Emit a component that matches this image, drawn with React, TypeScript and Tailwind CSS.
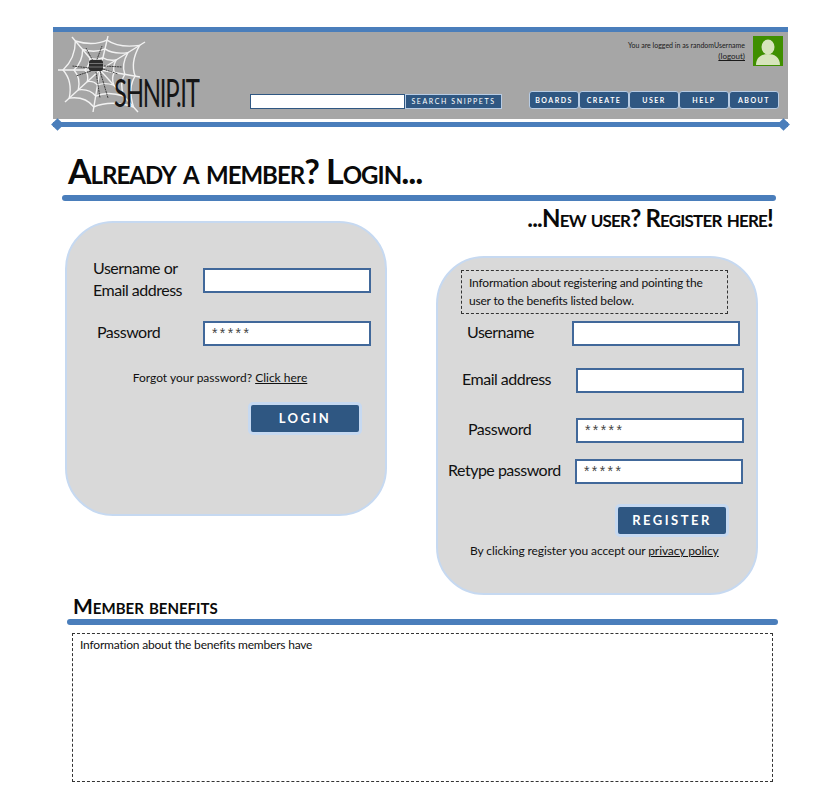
const font = { fontFamily: 'Lato, "Liberation Sans", sans-serif' };
const maskFont = { fontFamily: '"Liberation Sans", sans-serif' };

// spoke ends of the logo's web, relative to the svg box
const center = [42, 34];
const spokes = [
  [14, 1], [50, 0], [87, 6], [82, 41], [80, 76], [35, 76], [7, 66], [0, 34],
];

function webPaths() {
  const out: string[] = [];
  [0.36, 0.62, 0.88].forEach((t) => {
    const pts = spokes.map(([x, y]) => [center[0] + (x - center[0]) * t, center[1] + (y - center[1]) * t]);
    let d = `M${pts[0][0]} ${pts[0][1]}`;
    pts.forEach((p, i) => {
      const n = pts[(i + 1) % pts.length];
      const cx = center[0] + ((p[0] + n[0]) / 2 - center[0]) * 0.8;
      const cy = center[1] + ((p[1] + n[1]) / 2 - center[1]) * 0.8;
      d += ` Q${cx} ${cy} ${n[0]} ${n[1]}`;
    });
    out.push(d);
  });
  return out;
}

function Logo() {
  return (
    <div className="relative h-[80px] w-[145px]">
      <svg width="92" height="80" viewBox="0 0 92 80" className="absolute left-0 top-0">
        {spokes.map(([x, y], i) => (
          <line key={i} x1={center[0]} y1={center[1]} x2={x} y2={y} stroke="#f2f2f2" strokeWidth="1.4" />
        ))}
        {webPaths().map((d) => (
          <path key={d} d={d} fill="none" stroke="#f2f2f2" strokeWidth="1.4" />
        ))}
        <g stroke="#222" strokeWidth="0.8" fill="none" strokeDasharray="2 0.6">
          <path d="M36 27 L28 12 M38 26 L44 10 M32 32 L14 30 M33 35 L18 40 M46 30 L64 31 M45 33 L60 38 M38 36 L42 62 M42 35 L50 62" />
        </g>
        <rect x="31" y="24" width="14" height="11" rx="2" fill="#2b2b2b" />
        <path d="M31 27.5 H45 M31 31 H45" stroke="#a6a6a6" strokeWidth="0.6" />
      </svg>
      <span className="absolute left-[56px] top-[37px] text-[38px] leading-[38px] tracking-[-2px] text-[#161616] [transform:scaleX(0.63)] origin-left whitespace-nowrap" style={font}>
        SHNIP.IT
      </span>
    </div>
  );
}

function Avatar() {
  return (
    <svg width="30" height="30" viewBox="0 0 30 30" className="shrink-0">
      <rect width="30" height="30" fill="#3f8f00" />
      <ellipse cx="15" cy="11" rx="6.5" ry="7.5" fill="#d7e4bc" />
      <path d="M3 29 C3 21 9 18 15 18 C21 18 27 21 27 29 Z" fill="#d7e4bc" />
    </svg>
  );
}

const navItems = ["BOARDS", "CREATE", "USER", "HELP", "ABOUT"];

function Header() {
  return (
    <div className="ml-[53px] mr-[47px] pt-[27px]">
      <div className="border-t-[5px] border-[#4a7ebb] bg-[#a6a6a6] h-[92px] flex px-[5px] pt-[4px]">
        <Logo />
        <div className="flex pt-[58px] ml-[47px]">
          <div className="h-[15px] w-[155px] bg-white border border-[#2f5782]" />
          <div className="h-[15px] w-[97px] flex items-center justify-center bg-[#2f5782] border border-[#b8cce4] text-[7px] tracking-[1.6px] text-white" style={font}>
            SEARCH SNIPPETS
          </div>
        </div>
        <div className="flex-1 flex flex-col items-end">
          <div className="flex gap-[8px]">
            <div className="text-right text-[7px] leading-[11px] text-[#1a1a1a] pt-[4px]" style={font}>
              <div>You are logged in as randomUsername</div>
              <div className="underline text-[8px]">(logout)</div>
            </div>
            <Avatar />
          </div>
          <div className="flex mt-[25px] mr-[4px]">
            {navItems.map((n) => (
              <div key={n} className="w-[50px] h-[18px] flex items-center justify-center rounded-[3px] border border-[#b8cce4] bg-[#2f5782] text-[7px] font-bold tracking-[1.5px] text-white" style={font}>
                {n}
              </div>
            ))}
          </div>
        </div>
      </div>
      <div className="relative mt-[3px] h-[5px] bg-[#4a7ebb]">
        <div className="absolute left-0 -top-[2px] h-[9px] w-[9px] rotate-45 bg-[#4a7ebb]" />
        <div className="absolute right-0 -top-[2px] h-[9px] w-[9px] rotate-45 bg-[#4a7ebb]" />
      </div>
    </div>
  );
}

function Field({ label, mask, className, labelClass }: { label: React.ReactNode; mask?: boolean; className: string; labelClass: string }) {
  return (
    <div className={`flex items-center ${className}`}>
      <div className={`pb-[3px] text-[16px] leading-[22px] tracking-[-0.5px] whitespace-nowrap text-[#111] ${labelClass}`} style={font}>
        {label}
      </div>
      <div className="h-[25px] w-[168px] flex items-center bg-white border-2 border-[#41689a] pl-[7px] text-[14px] tracking-[2.4px] text-[#444]" style={maskFont}>
        {mask ? "*****" : ""}
      </div>
    </div>
  );
}

function ActionButton({ label }: { label: string }) {
  return (
    <div className="h-[33px] w-[114px] flex items-center justify-center rounded-[5px] border-[3px] border-[#c6d9f1] bg-[#2f5782] text-[13px] font-bold tracking-[2.5px] text-white" style={font}>
      {label}
    </div>
  );
}

function LoginCard() {
  return (
    <div className="w-[322px] h-[295px] rounded-[48px] border-2 border-[#c6d9f1] bg-[#d9d9d9] pt-[34px]">
      <Field
        className="ml-[26px]"
        labelClass="w-[110px]"
        label={<>Username or<br />Email address</>}
      />
      <Field className="ml-[30px] mt-[17px]" labelClass="w-[106px]" label="Password" mask />
      <div className="mt-[22px] text-center text-[12px] leading-[20px] text-[#111] pr-[12px]" style={font}>
        Forgot your password? <span className="underline">Click here</span>
      </div>
      <div className="flex mt-[14px] ml-[181px]">
        <ActionButton label="LOGIN" />
      </div>
    </div>
  );
}

function RegisterCard() {
  return (
    <div className="w-[322px] h-[339px] rounded-[48px] border-2 border-[#c6d9f1] bg-[#d9d9d9] pt-[12px]">
      <div className="ml-[23px] w-[267px] h-[44px] border border-dashed border-[#333] px-[7px] py-[3px] text-[12px] leading-[18px] tracking-[-0.2px] whitespace-nowrap text-[#111]" style={font}>
        Information about registering and pointing the<br />user to the benefits listed below.
      </div>
      <Field className="ml-[29px] mt-[7px]" labelClass="w-[105px]" label="Username" />
      <Field className="ml-[24px] mt-[22px]" labelClass="w-[114px]" label="Email address" />
      <Field className="ml-[30px] mt-[25px]" labelClass="w-[108px]" label="Password" mask />
      <Field className="ml-[10px] mt-[16px]" labelClass="w-[127px]" label="Retype password" mask />
      <div className="flex mt-[20px] ml-[177px]">
        <ActionButton label="REGISTER" />
      </div>
      <div className="mt-[4px] ml-[32px] text-[12px] leading-[20px] tracking-[-0.1px] whitespace-nowrap text-[#111]" style={font}>
        By clicking register you accept our <span className="underline">privacy policy</span>
      </div>
    </div>
  );
}

export default function App() {
  return (
    <div className="w-[835px] h-[796px] bg-white overflow-hidden">
      <Header />
      <div className="ml-[62px] w-[714px] mt-[24px]">
        <h1 className="ml-[6px] h-[40px] text-[34px] leading-[40px] tracking-[-1px] font-bold text-[#0a0a0a] [font-variant:small-caps]" style={font}>
          Already a member? Login...
        </h1>
        <div className="mt-[4px] h-[6px] rounded-full bg-[#4a7ebb]" />
      </div>
      <div className="flex ml-[65px] w-[711px]">
        <div className="mt-[20px]">
          <LoginCard />
        </div>
        <div className="ml-[49px] flex-1">
          <div className="pt-[3px] pr-[3px] h-[55px] text-right text-[24px] leading-[28px] tracking-[-0.8px] font-bold text-[#0a0a0a] [font-variant:small-caps]" style={font}>
            ...New user? Register here!
          </div>
          <RegisterCard />
        </div>
      </div>
      <div className="ml-[67px] w-[711px]">
        <h2 className="ml-[6px] h-[24px] text-[21px] leading-[22px] font-bold text-[#0a0a0a] [font-variant:small-caps]" style={font}>
          Member benefits
        </h2>
        <div className="h-[6px] rounded-full bg-[#4a7ebb]" />
        <div className="mt-[8px] ml-[5px] w-[701px] h-[149px] border border-dashed border-[#333] px-[7px] py-[2px] text-[12px] leading-[18px] tracking-[-0.2px] text-[#111]" style={font}>
          Information about the benefits members have
        </div>
      </div>
    </div>
  );
}
